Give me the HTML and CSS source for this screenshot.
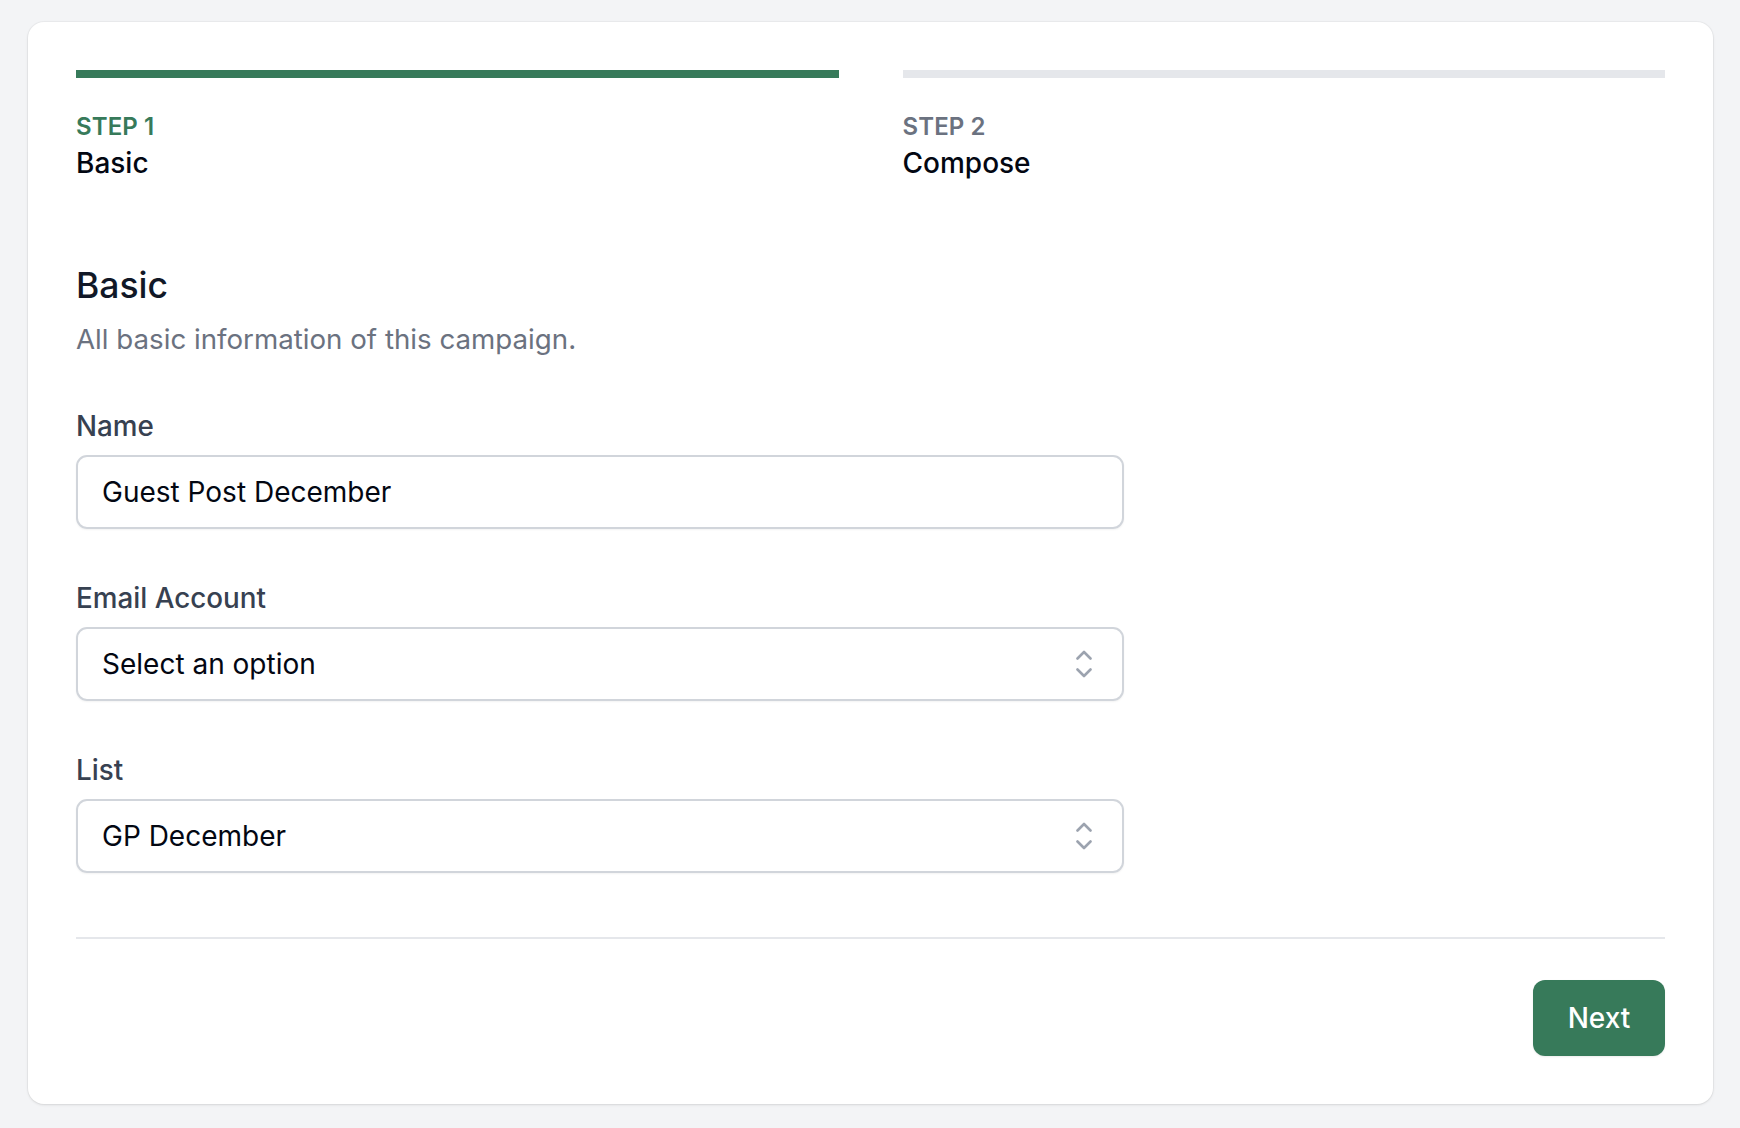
FILE: index.html
```html
<!DOCTYPE html>
<html lang="en">
<head>
<meta charset="utf-8">
<title>Campaign</title>
<link rel="stylesheet" href="styles.css">
</head>
<body>
<div class="card">
  <div class="steps">
    <div class="step active">
      <div class="step-bar"></div>
      <div class="step-num">STEP 1</div>
      <div class="step-name">Basic</div>
    </div>
    <div class="step">
      <div class="step-bar"></div>
      <div class="step-num">STEP 2</div>
      <div class="step-name">Compose</div>
    </div>
  </div>

  <div class="section">
    <h2 class="section-title">Basic</h2>
    <p class="section-desc">All basic information of this campaign.</p>

    <div class="fields">
      <div class="field">
        <label class="label">Name</label>
        <div class="control">Guest Post December</div>
      </div>
      <div class="field">
        <label class="label">Email Account</label>
        <div class="control select">Select an option
          <svg class="chev" viewBox="0 0 16 28" width="16" height="28"><polyline points="1.5,8.5 8,2 14.5,8.5"/><polyline points="1.5,19.5 8,26 14.5,19.5"/></svg>
        </div>
      </div>
      <div class="field">
        <label class="label">List</label>
        <div class="control select">GP December
          <svg class="chev" viewBox="0 0 16 28" width="16" height="28"><polyline points="1.5,8.5 8,2 14.5,8.5"/><polyline points="1.5,19.5 8,26 14.5,19.5"/></svg>
        </div>
      </div>
    </div>
  </div>

  <div class="footer">
    <button class="btn">Next</button>
  </div>
</div>
</body>
</html>
```
FILE: styles.css
```css
* { box-sizing: border-box; }
html, body { margin: 0; }
body {
  background: #f3f4f6;
  padding: 22px 27px 24px 28px;
  font-family: Inter, "Noto Sans", sans-serif;
  color: #111827;
}
.card {
  background: #fff;
  border-radius: 16px;
  box-shadow: 0 1px 3px rgba(0,0,0,0.1), 0 0 0 1px rgba(0,0,0,0.03);
  padding: 48px 48px 48px 48px;
  height: 1082px;
}
.steps {
  display: grid;
  grid-template-columns: 1fr 1fr;
  column-gap: 64px;
}
.step-bar {
  height: 8px;
  background: #e5e7eb;
}
.step.active .step-bar { background: #377a5a; }
.step-num {
  margin-top: 33px;
  font-size: 24px;
  line-height: 32px;
  font-weight: 600;
  color: #6b7280;
  letter-spacing: 0.1px;
}
.step.active .step-num { color: #377a5a; }
.step-name {
  margin-top: 2px;
  font-size: 28px;
  line-height: 36px;
  font-weight: 500;
  color: #030712;
}
.section { margin-top: 84px; }
.section-title {
  margin: 0;
  font-size: 35.5px;
  line-height: 42px;
  font-weight: 500;
  color: #111827;
}
.section-desc {
  margin: 15px 0 0;
  font-size: 27.7px;
  line-height: 34px;
  color: #6b7280;
}
.fields {
  margin-top: 52px;
  max-width: 1048px;
  display: flex;
  flex-direction: column;
  gap: 51px;
}
.label {
  display: block;
  font-size: 27.8px;
  line-height: 36px;
  font-weight: 500;
  color: #374151;
}
.control {
  position: relative;
  margin-top: 11px;
  height: 74px;
  border: 2px solid #d1d5db;
  border-radius: 11px;
  box-shadow: 0 1px 2px rgba(0,0,0,0.05);
  padding: 0 24px;
  display: flex;
  align-items: center;
  font-size: 28px;
  color: #030712;
}
.chev {
  position: absolute;
  right: 30px;
  top: 50%;
  transform: translateY(-50%);
  fill: none;
  stroke: #9ca3af;
  stroke-width: 2.6;
  stroke-linecap: round;
  stroke-linejoin: round;
}
.footer {
  margin-top: 64px;
  border-top: 2px solid #e5e7eb;
  padding-top: 41px;
  display: flex;
  justify-content: flex-end;
}
.btn {
  width: 132px;
  height: 76px;
  border: none;
  border-radius: 12px;
  background: #377a5a;
  color: #fff;
  font-family: Inter, "Noto Sans", sans-serif;
  font-size: 28px;
  font-weight: 500;
  box-shadow: 0 1px 2px rgba(0,0,0,0.08);
}
```
